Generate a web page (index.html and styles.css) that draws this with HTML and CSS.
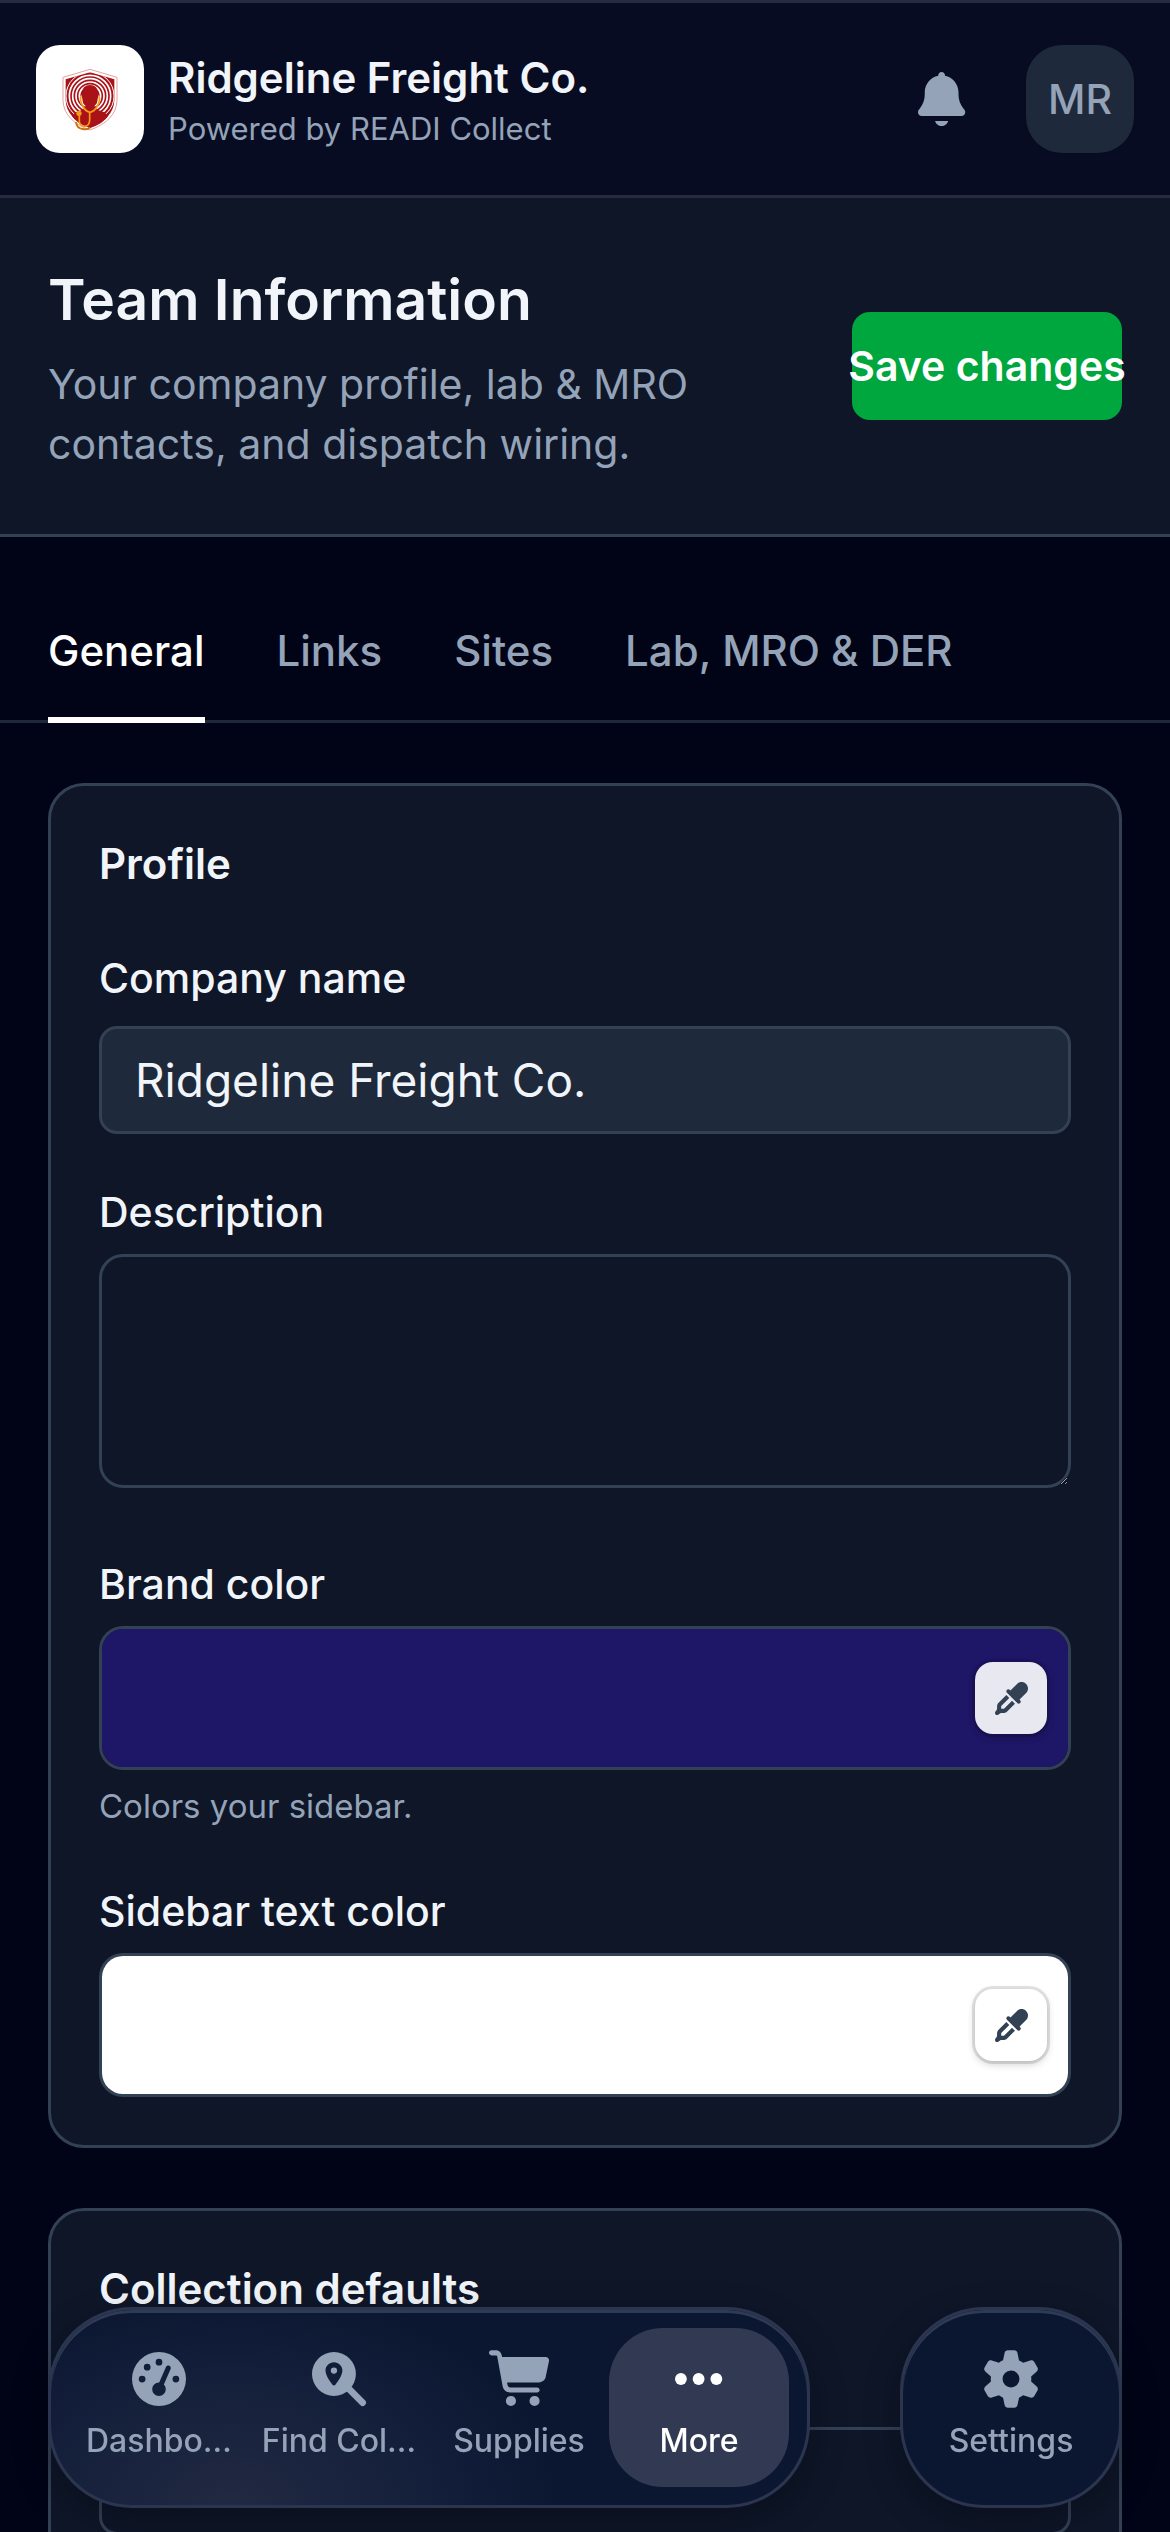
FILE: index.html
```html
<!DOCTYPE html>
<html lang="en">
<head>
  <meta charset="utf-8">
  <meta name="viewport" content="width=device-width, initial-scale=1">
  <title>Team Information</title>
  <link rel="stylesheet" href="styles.css">
</head>

<body>

  <header class="topbar">
    <svg class="logo" viewBox="18 15 324 324" aria-hidden="true">
      <clipPath id="shield"><path d="M180 97l73 21v63q-2 54-73 83q-71-29-73-83v-63z"/></clipPath>
      <path d="M180 88l81 24v70q-3 60-81 88q-78-28-81-88v-70z" fill="#fff" stroke="#e3a3a0" stroke-width="3"/>
      <path d="M180 97l73 21v63q-2 54-73 83q-71-29-73-83v-63z" fill="#a91217"/>
      <!-- fingerprint rings -->
      <g clip-path="url(#shield)" fill="none" stroke="#fff" stroke-width="5">
        <circle cx="180" cy="168" r="32"/>
        <circle cx="180" cy="168" r="42"/>
        <circle cx="180" cy="168" r="52"/>
        <circle cx="180" cy="168" r="62"/>
        <circle cx="180" cy="168" r="72" stroke-width="3"/>
      </g>
      <path d="M156 162q0-27 24-27t24 27q2 25-10 35v9l29 11 12 10q-14 23-55 37q-41-14-55-37l12-10 29-11v-9q-12-10-10-35z" fill="#a91217"/>
      <path d="M155 166q-9 4-6 17t11 12zM205 166q9 4 6 17t-11 12z" fill="#fff"/>
      <g fill="none" stroke="#f59a12" stroke-width="5">
        <path d="M154 168q-6 8 2 26 8 20 24 23 16-3 24-23 8-18 2-26M179 217v22q0 20-17 20-14-2-14-16v-22"/>
        <path d="M138 246q2 19 20 21 16 3 22-5" stroke="#c87310" stroke-width="6"/>
      </g>
      <circle cx="147" cy="220" r="8" fill="#f59a12"/>
    </svg>
    <div class="brand">
      <strong class="brand-name">Ridgeline Freight Co.</strong>
      <span class="brand-sub">Powered by READI Collect</span>
    </div>
    <button class="icon-button" type="button" aria-label="Notifications">
      <svg class="icon" viewBox="0 0 448 512"><path d="M224 0c-17.7 0-32 14.3-32 32l0 3.2C119 50 64 114.6 64 192l0 21.7c0 48.1-16.4 94.8-46.4 132.4L7.8 358.3C2.7 364.6 0 372.4 0 380.5 0 400.1 15.9 416 35.5 416l376.9 0c19.6 0 35.5-15.9 35.5-35.5 0-8.1-2.7-15.9-7.8-22.2l-9.8-12.2C400.4 308.5 384 261.8 384 213.7l0-21.7c0-77.4-55-142-128-156.8l0-3.2c0-17.7-14.3-32-32-32zM162 464c7.1 27.6 32.2 48 62 48s54.9-20.4 62-48l-124 0z"/></svg>
    </button>
    <button class="avatar" type="button">MR</button>
  </header>

  <section class="page-head">
    <div class="page-text">
      <h1>Team Information</h1>
      <p>Your company profile, lab &amp; MRO contacts, and dispatch wiring.</p>
    </div>
    <button class="save" type="submit" form="team-form">Save changes</button>
  </section>

  <nav class="tabs">
    <a class="tab active" href="#general">General</a>
    <a class="tab" href="#links">Links</a>
    <a class="tab" href="#sites">Sites</a>
    <a class="tab" href="#lab">Lab, MRO &amp; DER</a>
  </nav>

  <form id="team-form" class="cards">
    <section class="card">
      <h2>Profile</h2>
      <div class="field">
        <label for="company">Company name</label>
        <input id="company" class="control filled" type="text" value="Ridgeline Freight Co.">
      </div>
      <div class="field">
        <label for="description">Description</label>
        <textarea id="description" class="control"></textarea>
      </div>
      <div class="field">
        <label for="brand-color">Brand color</label>
        <div class="color-box">
          <input id="brand-color" type="color" value="#1e1666">
          <button class="picker dim" type="button" aria-label="Pick brand color">
            <svg viewBox="0 0 512 512"><path d="M341.6 29.2L240.1 130.8l-9.4-9.4c-12.5-12.5-32.8-12.5-45.3 0s-12.5 32.8 0 45.3l160 160c12.5 12.5 32.8 12.5 45.3 0s12.5-32.8 0-45.3l-9.4-9.4L482.8 170.4c39-39 39-102.2 0-141.1s-102.2-39-141.1 0zM55.4 323.3c-15 15-23.4 35.4-23.4 56.6v42.4L5.4 462.2c-8.5 12.7-6.8 29.6 4 40.4s27.7 12.5 40.4 4L89.7 480h42.4c21.2 0 41.6-8.4 56.6-23.4L309.4 335.9l-45.3-45.3L143.4 411.3c-3 3-7.1 4.7-11.3 4.7H96V379.9c0-4.2 1.7-8.3 4.7-11.3L221.4 247.9l-45.3-45.3L55.4 323.3z"/></svg>
          </button>
        </div>
        <p class="hint">Colors your sidebar.</p>
      </div>
      <div class="field">
        <label for="text-color">Sidebar text color</label>
        <div class="color-box">
          <input id="text-color" type="color" value="#ffffff">
          <button class="picker" type="button" aria-label="Pick sidebar text color">
            <svg viewBox="0 0 512 512"><path d="M341.6 29.2L240.1 130.8l-9.4-9.4c-12.5-12.5-32.8-12.5-45.3 0s-12.5 32.8 0 45.3l160 160c12.5 12.5 32.8 12.5 45.3 0s12.5-32.8 0-45.3l-9.4-9.4L482.8 170.4c39-39 39-102.2 0-141.1s-102.2-39-141.1 0zM55.4 323.3c-15 15-23.4 35.4-23.4 56.6v42.4L5.4 462.2c-8.5 12.7-6.8 29.6 4 40.4s27.7 12.5 40.4 4L89.7 480h42.4c21.2 0 41.6-8.4 56.6-23.4L309.4 335.9l-45.3-45.3L143.4 411.3c-3 3-7.1 4.7-11.3 4.7H96V379.9c0-4.2 1.7-8.3 4.7-11.3L221.4 247.9l-45.3-45.3L55.4 323.3z"/></svg>
          </button>
        </div>
      </div>
    </section>

    <section class="card defaults">
      <h2 id="defaults-title">Collection defaults</h2>
      <input class="control" type="text" aria-labelledby="defaults-title">
    </section>
  </form>

  <nav class="dock">
    <div class="pill glow">
      <a class="dock-item" href="#dashboard">
        <svg class="icon" viewBox="0 0 512 512"><path fill-rule="evenodd" d="M0 256a256 256 0 1 1 512 0A256 256 0 1 1 0 256zM288 96a32 32 0 1 0 -64 0 32 32 0 1 0 64 0zM256 416c35.3 0 64-28.7 64-64c0-17.4-6.9-33.1-18.1-44.6L366 161.7c5.3-12.1-.2-26.3-12.3-31.6s-26.3 .2-31.6 12.3L257.9 288c-.6 0-1.3 0-1.9 0c-35.3 0-64 28.7-64 64s28.7 64 64 64zM176 144a32 32 0 1 0 -64 0 32 32 0 1 0 64 0zM96 288a32 32 0 1 0 0-64 32 32 0 1 0 0 64zm352-32a32 32 0 1 0 -64 0 32 32 0 1 0 64 0z"/></svg>
        <span>Dashbo…</span>
      </a>
      <a class="dock-item" href="#find">
        <svg class="icon" viewBox="0 0 512 512">
          <path fill-rule="evenodd" d="M208 0a208 208 0 1 1 0 416a208 208 0 1 1 0-416zM208 96c-45 0-80 35-80 78c0 48 42 106 66 136c8 10 20 10 28 0c24-30 66-88 66-136c0-43-35-78-80-78zM208 146a30 30 0 1 1 0 60a30 30 0 1 1 0-60z"/>
          <path d="M350 350L480 480" stroke="currentColor" stroke-width="64" stroke-linecap="round"/>
        </svg>
        <span>Find Col…</span>
      </a>
      <a class="dock-item" href="#supplies">
        <svg class="icon" viewBox="0 0 576 512"><path d="M24-16C10.7-16 0-5.3 0 8S10.7 32 24 32l45.3 0c3.9 0 7.2 2.8 7.9 6.6l52.1 286.3c6.2 34.2 36 59.1 70.8 59.1L456 384c13.3 0 24-10.7 24-24s-10.7-24-24-24l-255.9 0c-11.6 0-21.5-8.3-23.6-19.7l-5.1-28.3 303.6 0c30.8 0 57.2-21.9 62.9-52.2L568.9 85.9C572.6 66.2 557.5 48 537.4 48L124.7 48l-.4-2C119.5 9.4 97.6-16 63.3-16L24-16zM208 512a48 48 0 1 0 0-96 48 48 0 1 0 0 96zm224 0a48 48 0 1 0 0-96 48 48 0 1 0 0 96z"/></svg>
        <span>Supplies</span>
      </a>
      <a class="dock-item current" href="#more">
        <svg class="icon" viewBox="0 0 448 512"><circle cx="56" cy="256" r="56"/><circle cx="224" cy="256" r="56"/><circle cx="392" cy="256" r="56"/></svg>
        <span>More</span>
      </a>
    </div>
    <div class="pill">
      <a class="dock-item" href="#settings">
        <svg class="icon" viewBox="0 0 512 512"><path d="M195.1 9.5C198.1-5.3 211.2-16 226.4-16l59.8 0c15.2 0 28.3 10.7 31.3 25.5L332 79.5c14.1 6 27.3 13.7 39.3 22.8l67.8-22.5c14.4-4.8 30.2 1.2 37.8 14.4l29.9 51.8c7.6 13.2 4.9 29.8-6.5 39.9L447 233.3c.9 7.4 1.3 15 1.3 22.7s-.5 15.3-1.3 22.7l53.4 47.5c11.4 10.1 14 26.8 6.5 39.9l-29.9 51.8c-7.6 13.1-23.4 19.2-37.8 14.4l-67.8-22.5c-12.1 9.1-25.3 16.7-39.3 22.8l-14.4 69.9c-3.1 14.9-16.2 25.5-31.3 25.5l-59.8 0c-15.2 0-28.3-10.7-31.3-25.5l-14.4-69.9c-14.1-6-27.2-13.7-39.3-22.8L73.5 432.3c-14.4 4.8-30.2-1.2-37.8-14.4L5.8 366.1c-7.6-13.2-4.9-29.8 6.5-39.9l53.4-47.5c-.9-7.4-1.3-15-1.3-22.7s.5-15.3 1.3-22.7L12.3 185.8c-11.4-10.1-14-26.8-6.5-39.9L35.7 94.1c7.6-13.2 23.4-19.2 37.8-14.4l67.8 22.5c12.1-9.1 25.3-16.7 39.3-22.8L195.1 9.5zM256.3 336a80 80 0 1 0 -.6-160 80 80 0 1 0 .6 160z"/></svg>
        <span>Settings</span>
      </a>
    </div>
  </nav>

</body>
</html>
```
FILE: styles.css
```css
*{
  box-sizing: border-box;
  margin: 0;
  padding: 0;
}

html{
  scrollbar-width: none;
}

body{
  background-color: #000416;
  color: #f1f5f9;
  font-family: Inter, "Liberation Sans", sans-serif;
  font-size: 42px;
  line-height: 60px;
}

button, input, textarea{
  font-family: inherit;
  font-size: inherit;
  color: inherit;
  border: none;
}

a{
  color: inherit;
  text-decoration: none;
}

.icon{
  display: block;
  height: 54px;
  fill: currentColor;
  overflow: visible;
}

/* top bar */
.topbar{
  display: flex;
  align-items: center;
  padding: 42px 36px;
  background-color: #070c22;
  border-top: 3px solid #262b42;
  border-bottom: 3px solid #262b42;
}

.logo{
  width: 108px;
  height: 108px;
  margin-right: 24px;
  background-color: #fff;
  border-radius: 24px;
}

.brand{
  flex: 1;
  display: flex;
  flex-direction: column;
  padding-top: 6px;
}

.brand-name{
  font-size: 42px;
  line-height: 54px;
  font-weight: 600;
}

.brand-sub{
  font-size: 31px;
  line-height: 48px;
  color: #94a3b8;
}

.icon-button{
  display: flex;
  align-items: center;
  justify-content: center;
  width: 108px;
  height: 108px;
  margin-right: 30px;
  background: none;
  color: #94a3b8;
}

.avatar{
  width: 108px;
  height: 108px;
  border-radius: 36px;
  background-color: #1e293b;
  color: #94a3b8;
  font-size: 41px;
  font-weight: 500;
}

/* page heading */
.page-head{
  display: flex;
  align-items: center;
  justify-content: space-between;
  gap: 48px;
  padding: 60px 48px;
  background-color: #0e1628;
  border-bottom: 3px solid #334155;
}

.page-text{
  flex: 1;
}

h1{
  margin-bottom: 12px;
  font-size: 57px;
  line-height: 84px;
  font-weight: 600;
}

.page-text p{
  max-width: 700px;
  font-size: 41px;
  color: #94a3b8;
}

.save{
  display: flex;
  align-items: center;
  justify-content: center;
  width: 270px;
  height: 108px;
  border-radius: 18px;
  background-color: #00a63e;
  color: #fff;
  font-size: 41px;
  font-weight: 600;
  white-space: nowrap;
}

/* tabs */
.tabs{
  display: flex;
  gap: 72px;
  margin-top: 48px;
  padding: 0 48px;
  box-shadow: inset 0 -3px #1e293b;
}

.tab{
  padding: 36px 0;
  border-bottom: 6px solid transparent;
  color: #94a3b8;
  font-size: 42px;
  font-weight: 500;
}

.tab.active{
  color: #fff;
  border-color: #fff;
}

/* cards */
.cards{
  display: flex;
  flex-direction: column;
  gap: 60px;
  padding: 60px 48px 240px;
}

.card{
  padding: 48px;
  background-color: #0e1628;
  border: 3px solid #334155;
  border-radius: 36px;
}

h2{
  font-size: 42px;
  line-height: 60px;
  font-weight: 600;
}

.card h2{
  margin-bottom: 54px;
}

.card.defaults h2{
  margin-bottom: 108px;
}

.field + .field{
  margin-top: 48px;
}

.field label{
  display: block;
  margin-bottom: 12px;
  font-size: 41px;
  font-weight: 500;
}

.control{
  display: block;
  width: 100%;
  height: 108px;
  padding: 0 33px;
  background-color: transparent;
  border: 3px solid #334155;
  border-radius: 18px;
  font-size: 46px;
}

.control.filled{
  margin-top: 18px;
  background-color: #1e293b;
}

textarea.control{
  height: 234px;
  padding: 24px 33px;
  margin-bottom: 66px;
  border-radius: 24px;
}

.color-box{
  position: relative;
  height: 144px;
  border: 3px solid #334155;
  border-radius: 24px;
  overflow: hidden;
}

.color-box input{
  display: block;
  width: 100%;
  height: 100%;
  background: none;
}

.color-box input::-webkit-color-swatch-wrapper{
  padding: 0;
}

.color-box input::-webkit-color-swatch{
  border: none;
}

/* sits over the swatch */
.picker{
  position: absolute;
  top: 33px;
  right: 21px;
  display: flex;
  align-items: center;
  justify-content: center;
  width: 72px;
  height: 72px;
  border-radius: 18px;
  background-color: #fff;
  color: #334155;
  box-shadow: 0 0 0 3px rgba(0,0,0,.1), 0 3px 9px rgba(0,0,0,.2);
}

.picker.dim{
  background-color: #e8e9f0;
}

.picker svg{
  width: 33px;
  height: 33px;
  fill: currentColor;
}

.hint{
  margin: 12px 0 51px;
  font-size: 33px;
  line-height: 48px;
  color: #94a3b8;
}

/* floating bottom nav */
.dock{
  position: fixed;
  left: 48px;
  right: 48px;
  bottom: 24px;
  display: flex;
  justify-content: space-between;
}

.pill{
  display: flex;
  padding: 18px;
  background-color: #0b1731;
  border: 3px solid #2b3550;
  border-radius: 84px;
  box-shadow: inset 0 3px #2f3a55, 0 12px 36px rgba(0,0,0,.3);
}

.pill.glow{
  background-image: radial-gradient(ellipse 330px 220px at 24% 100%, #222942, rgba(28,39,68,.5) 60%, transparent);
}

.dock-item{
  display: flex;
  flex-direction: column;
  align-items: center;
  justify-content: center;
  gap: 12px;
  width: 180px;
  height: 159px;
  border-radius: 54px;
  color: #94a3b8;
  font-size: 32px;
  line-height: 45px;
  font-weight: 500;
}

.dock-item.current{
  background-color: #323a53;
  color: #fff;
}
```
